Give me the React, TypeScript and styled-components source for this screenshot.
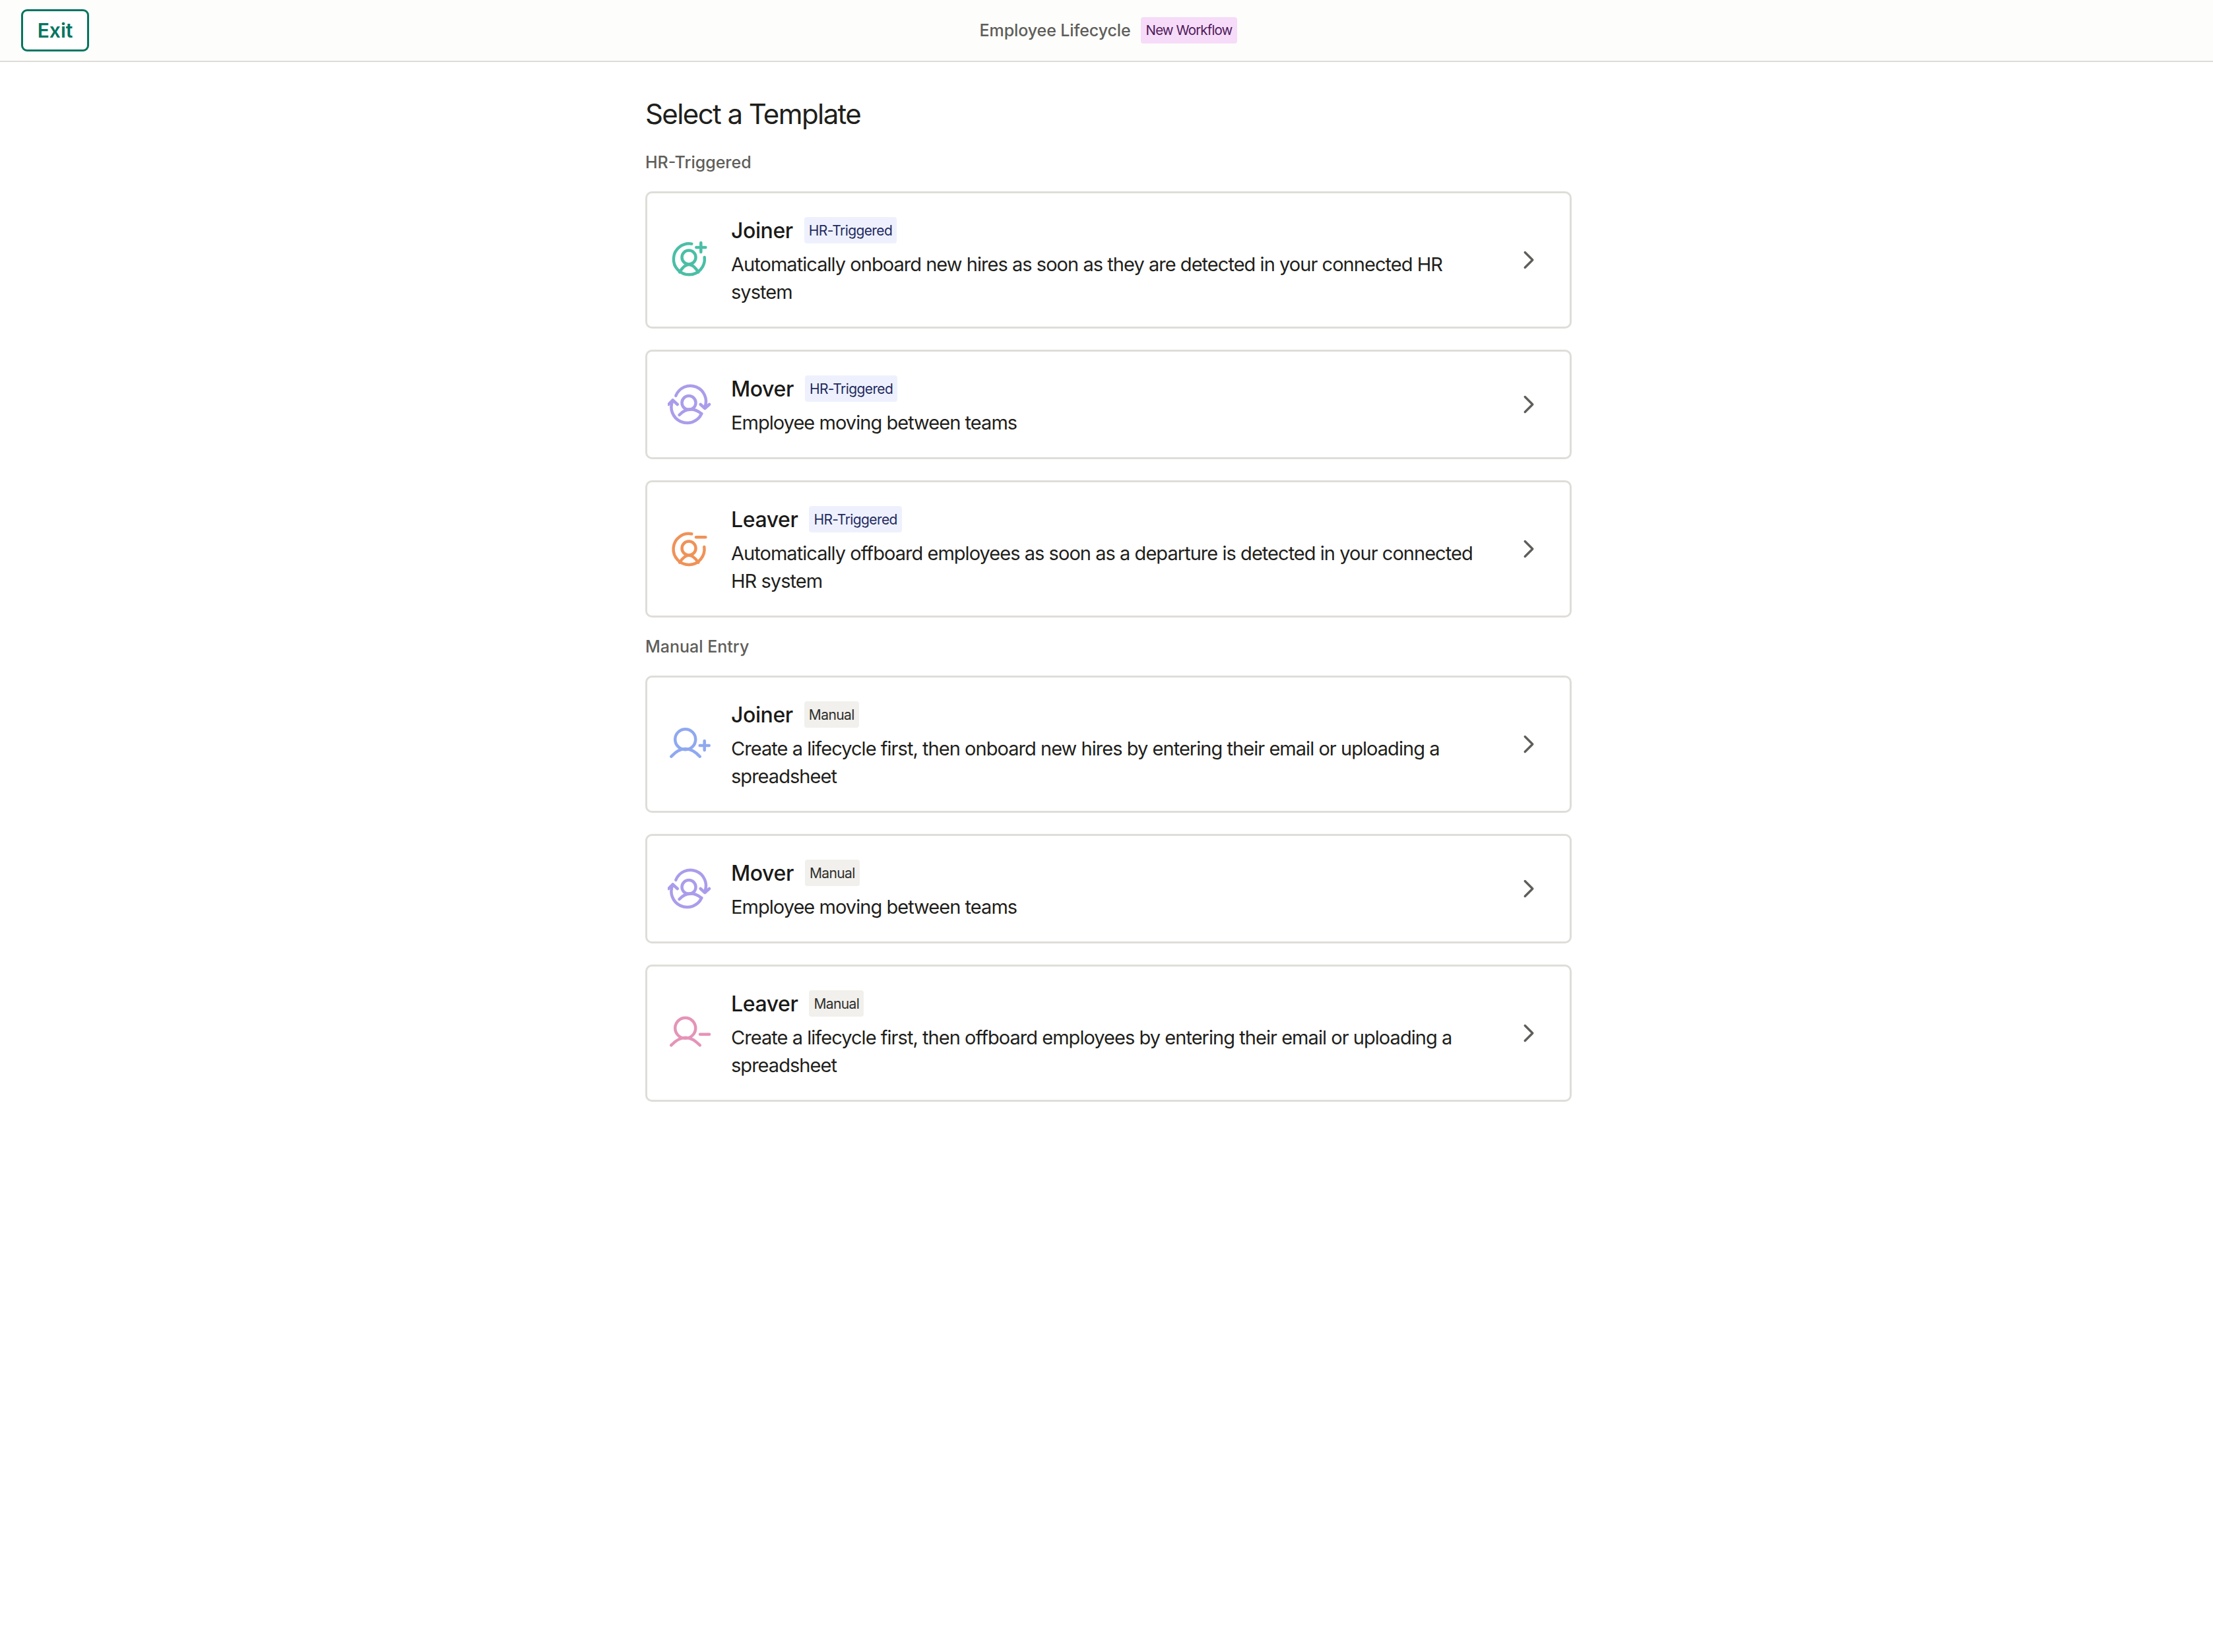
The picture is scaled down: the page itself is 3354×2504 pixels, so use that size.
import React from 'react';
import styled, { createGlobalStyle } from 'styled-components';
import { ChevronRight } from 'lucide-react';

const GlobalStyle = createGlobalStyle`
  html, body {
    margin: 0;
    padding: 0;
    background: #ffffff;
    font-family: Inter, 'Noto Sans', sans-serif;
  }
  * {
    box-sizing: border-box;
  }
`;

const Page = styled.div`
  min-height: 2504px;
  background: #ffffff;
`;

const Header = styled.header`
  height: 94px;
  display: grid;
  grid-template-columns: 1fr auto 1fr;
  align-items: center;
  padding: 0 32px;
  background: #fdfdfb;
  border-bottom: 2px solid #dcdbd7;
`;

const ExitButton = styled.button`
  justify-self: start;
  width: 103px;
  height: 64px;
  background: #ffffff;
  border: 3px solid #007560;
  border-radius: 9px;
  color: #007560;
  font-family: inherit;
  font-size: 30px;
  font-weight: 600;
  margin-top: -1px;
`;

const HeaderTitle = styled.div`
  display: flex;
  align-items: center;
  gap: 15px;
  margin-left: 6px;
  margin-top: -1px;
`;

const WorkflowName = styled.span`
  font-size: 25px;
  font-weight: 500;
  letter-spacing: -0.1px;
  color: #5e5e5a;
`;

const Badge = styled.span<{ $tone: 'hr' | 'manual' | 'workflow' }>`
  display: inline-flex;
  align-items: center;
  height: 40px;
  padding: 0 ${(p) => (p.$tone === 'workflow' ? '8px' : '7px')};
  border-radius: 4px;
  font-size: ${(p) => (p.$tone === 'workflow' ? '20.5px' : '21px')};
  font-weight: 400;
  letter-spacing: ${(p) => (p.$tone === 'workflow' ? '-0.9px' : '-0.6px')};
  white-space: nowrap;
  background: ${(p) => (p.$tone === 'hr' ? '#eef1fd' : p.$tone === 'manual' ? '#f1f0ec' : '#f6dcf8')};
  color: ${(p) => (p.$tone === 'hr' ? '#1f2a5f' : p.$tone === 'manual' ? '#2f2f2c' : '#4f1a5c')};
`;

const Main = styled.main`
  width: 1404px;
  margin: 0 auto;
  padding-top: 49px;
  position: relative;
  left: 3px;
`;

const Heading = styled.h1`
  margin: 0 0 25px;
  font-size: 42px;
  line-height: 60px;
  font-weight: 400;
  letter-spacing: -1.6px;
  color: #1f1f1c;
`;

const SectionLabel = styled.h2`
  margin: 0 0 26px;
  font-size: 25px;
  line-height: 36px;
  font-weight: 500;
  color: #5e5e5a;
`;

const CardList = styled.div`
  display: flex;
  flex-direction: column;
  gap: 32px;
  margin-bottom: 26px;
`;

const Card = styled.div`
  display: flex;
  align-items: center;
  padding: 31px 39px 31px 31px;
  background: #ffffff;
  border: 3px solid #deddd8;
  border-radius: 10px;
`;

const IconBox = styled.div`
  flex: 0 0 66px;
  width: 66px;
  height: 66px;
  margin-right: 30px;
`;

const CardBody = styled.div`
  flex: 1;
  min-width: 0;
  padding-right: 36px;
`;

const CardTitleRow = styled.div`
  display: flex;
  align-items: center;
  gap: 17px;
  height: 50px;
  margin-bottom: 6px;
`;

const CardTitle = styled.span`
  font-size: 32px;
  font-weight: 500;
  letter-spacing: -0.4px;
  color: #1a1a18;
`;

const CardText = styled.p`
  margin: 0;
  font-size: 29px;
  line-height: 42px;
  letter-spacing: -0.96px;
  color: #1f1f1c;
`;

const Chevron = styled(ChevronRight)`
  flex: 0 0 46px;
  color: #5e5e5a;
`;

const IconStroke = styled.svg<{ $color: string }>`
  display: block;
  fill: none;
  stroke: ${(p) => p.$color};
  stroke-width: 4.5;
  stroke-linecap: round;
  stroke-linejoin: round;
`;

type IconKind = 'joinerHr' | 'mover' | 'leaverHr' | 'joinerManual' | 'leaverManual';

const iconColors: Record<IconKind, string> = {
  joinerHr: '#4abfa5',
  mover: '#ab9ceb',
  leaverHr: '#f09258',
  joinerManual: '#8fa8f0',
  leaverManual: '#e594b8',
};

const LifecycleIcon = ({ kind }: { kind: IconKind }) => (
  <IconStroke $color={iconColors[kind]} width="66" height="66" viewBox="0 0 66 66">
    {kind === 'joinerHr' && (
      <>
        <path d="M36.3 8.6 A23.5 23.5 0 1 0 55.7 29" />
        <circle cx="32" cy="29" r="10.5" />
        <path d="M18 51.5 Q32 28.5 46.3 51.5" />
        <path d="M50.3 7 V21 M43.3 14 H57.3" />
      </>
    )}
    {kind === 'mover' && (
      <>
        <path d="M12.3 19.8 A23.5 23.5 0 0 1 56.3 37" />
        <path d="M49.7 33 L56.3 39 L63 33" />
        <path d="M51.3 47 A23.5 23.5 0 0 1 7.6 27" />
        <path d="M1.3 33 L7.6 26.5 L14.7 33" />
        <circle cx="32" cy="30.5" r="10.5" />
        <path d="M17.5 49 Q33 33 51 47" />
      </>
    )}
    {kind === 'leaverHr' && (
      <>
        <path d="M36.3 10.3 A23.5 23.5 0 1 0 55.3 30" />
        <circle cx="32" cy="32" r="10.5" />
        <path d="M18 53.7 Q32 32 46.3 53.7" />
        <path d="M43 15.3 H57.3" />
      </>
    )}
    {kind === 'joinerManual' && (
      <>
        <circle cx="26.7" cy="25.7" r="15.5" />
        <path d="M5.3 51.7 Q26.7 28.5 48.7 51.7" />
        <path d="M55.7 28 V42 M48.7 35 H62.7" />
      </>
    )}
    {kind === 'leaverManual' && (
      <>
        <circle cx="26.7" cy="25.3" r="15.5" />
        <path d="M5.3 51.3 Q26.7 28 48.7 51.3" />
        <path d="M49 34.7 H63" />
      </>
    )}
  </IconStroke>
);

interface Template {
  title: string;
  text: string;
  icon: IconKind;
}

const hrTemplates: Template[] = [
  {
    title: 'Joiner',
    text: 'Automatically onboard new hires as soon as they are detected in your connected HR system',
    icon: 'joinerHr',
  },
  { title: 'Mover', text: 'Employee moving between teams', icon: 'mover' },
  {
    title: 'Leaver',
    text: 'Automatically offboard employees as soon as a departure is detected in your connected HR system',
    icon: 'leaverHr',
  },
];

const manualTemplates: Template[] = [
  {
    title: 'Joiner',
    text: 'Create a lifecycle first, then onboard new hires by entering their email or uploading a spreadsheet',
    icon: 'joinerManual',
  },
  { title: 'Mover', text: 'Employee moving between teams', icon: 'mover' },
  {
    title: 'Leaver',
    text: 'Create a lifecycle first, then offboard employees by entering their email or uploading a spreadsheet',
    icon: 'leaverManual',
  },
];

const TemplateCard = ({ template, tone, label }: { template: Template; tone: 'hr' | 'manual'; label: string }) => (
  <Card>
    <IconBox>
      <LifecycleIcon kind={template.icon} />
    </IconBox>
    <CardBody>
      <CardTitleRow>
        <CardTitle>{template.title}</CardTitle>
        <Badge $tone={tone}>{label}</Badge>
      </CardTitleRow>
      <CardText>{template.text}</CardText>
    </CardBody>
    <Chevron size={46} strokeWidth={1.8} />
  </Card>
);

export default function App() {
  return (
    <Page>
      <GlobalStyle />
      <Header>
        <ExitButton>Exit</ExitButton>
        <HeaderTitle>
          <WorkflowName>Employee Lifecycle</WorkflowName>
          <Badge $tone="workflow">New Workflow</Badge>
        </HeaderTitle>
      </Header>
      <Main>
        <Heading>Select a Template</Heading>
        <SectionLabel>HR-Triggered</SectionLabel>
        <CardList>
          {hrTemplates.map((t) => (
            <TemplateCard key={t.icon} template={t} tone="hr" label="HR-Triggered" />
          ))}
        </CardList>
        <SectionLabel>Manual Entry</SectionLabel>
        <CardList>
          {manualTemplates.map((t) => (
            <TemplateCard key={t.icon} template={t} tone="manual" label="Manual" />
          ))}
        </CardList>
      </Main>
    </Page>
  );
}
